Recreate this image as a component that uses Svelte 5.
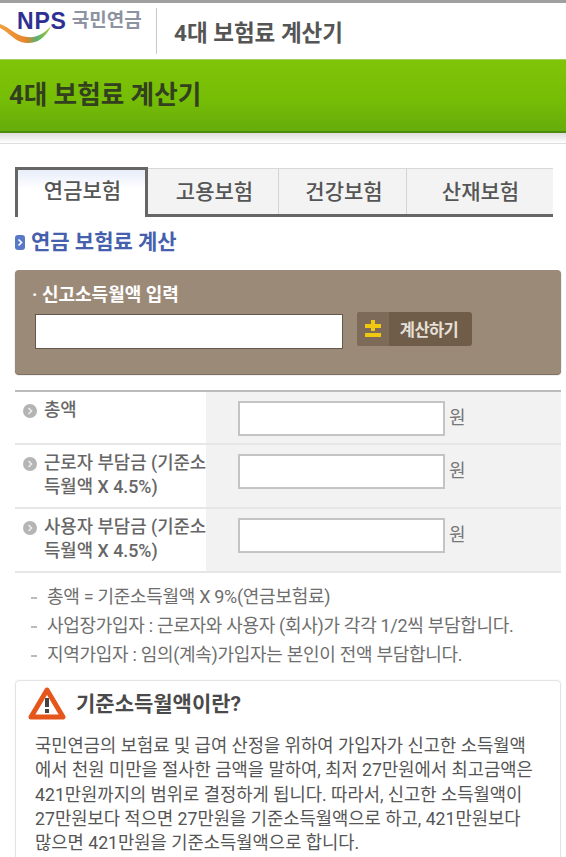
<script>
	const tabs = ['연금보험', '고용보험', '건강보험', '산재보험'];
	const rows = [
		{ label: '총액', tall: false },
		{ label: '근로자 부담금 (기준소득월액 X 4.5%)', tall: true },
		{ label: '사용자 부담금 (기준소득월액 X 4.5%)', tall: true }
	];
	const notes = [
		'총액 = 기준소득월액 X 9%(연금보험료)',
		'사업장가입자 : 근로자와 사용자 (회사)가 각각 1/2씩 부담합니다.',
		'지역가입자 : 임의(계속)가입자는 본인이 전액 부담합니다.'
	];
</script>

<div class="page">
	<header class="top">
		<div class="logo">
			<svg class="swoosh" viewBox="0 0 52 32" width="52" height="32" aria-hidden="true">
				<defs>
					<linearGradient id="sw" x1="0" x2="1" y1="0" y2="0">
						<stop offset="0" stop-color="#f0a040" />
						<stop offset="0.5" stop-color="#e8852a" />
						<stop offset="0.72" stop-color="#58b070" />
						<stop offset="1" stop-color="#a8cc30" />
					</linearGradient>
				</defs>
				<path d="M0 11 C10 14 15 23 27 24 C36 25 44 21 51 13 C46 25 36 31 26 30 C15 29 10 20 0 15 Z" fill="url(#sw)" />
			</svg>
			<span class="nps">NPS</span>
			<span class="kor">국민연금</span>
		</div>
		<span class="top-title">4대 보험료 계산기</span>
	</header>

	<div class="banner"><h1>4대 보험료 계산기</h1></div>
	<div class="rule"></div>

	<nav class="tabs">
		{#each tabs as tab, i}
			<div class="tab tab-{i}" class:active={i === 0}>{tab}</div>
		{/each}
	</nav>

	<h2 class="section">
		<svg viewBox="0 0 10 15" width="10" height="15" aria-hidden="true">
			<rect width="10" height="15" rx="3" fill="#5a78c8" />
			<path d="M3.5 4.5 L6.5 7.5 L3.5 10.5" fill="none" stroke="#fff" stroke-width="1.6" />
		</svg>
		연금 보험료 계산
	</h2>

	<section class="income">
		<label for="income-input">· 신고소득월액 입력</label>
		<div class="income-row">
			<input id="income-input" type="text" />
			<button type="button">
				<span class="btn-icon">
					<svg viewBox="0 0 16 18" width="16" height="18" aria-hidden="true">
						<path d="M6 0h4v4h6v4h-6v3H6V8H0V4h6z M0 13h16v4H0z" fill="#f0c810" />
					</svg>
				</span>
				<span class="btn-text">계산하기</span>
			</button>
		</div>
	</section>

	<div class="table">
		{#each rows as row}
			<div class="row" class:tall={row.tall}>
				<div class="row-label">
					<svg viewBox="0 0 14 14" width="14" height="14" aria-hidden="true">
						<circle cx="7" cy="7" r="7" fill="#b4b4b4" />
						<path d="M5.5 4 L8.5 7 L5.5 10" fill="none" stroke="#eee" stroke-width="1.5" />
					</svg>
					<span>{row.label}</span>
				</div>
				<div class="row-field">
					<input type="text" />
					<span class="won">원</span>
				</div>
			</div>
		{/each}
	</div>

	<ul class="notes">
		{#each notes as note}
			<li>{note}</li>
		{/each}
	</ul>

	<section class="card">
		<div class="card-head">
			<svg viewBox="0 0 38 34" width="38" height="34" aria-hidden="true">
				<path d="M19 3 L35 30 H3 Z" fill="#fff" stroke="#e4561c" stroke-width="5" stroke-linejoin="round" />
				<rect x="17" y="11" width="4" height="9" fill="#444" />
				<rect x="17" y="22" width="4" height="4" fill="#444" />
			</svg>
			<h3>기준소득월액이란?</h3>
		</div>
		<p>
			국민연금의 보험료 및 급여 산정을 위하여 가입자가 신고한 소득월액<br />
			에서 천원 미만을 절사한 금액을 말하여, 최저 27만원에서 최고금액은<br />
			421만원까지의 범위로 결정하게 됩니다. 따라서, 신고한 소득월액이<br />
			27만원보다 적으면 27만원을 기준소득월액으로 하고, 421만원보다<br />
			많으면 421만원을 기준소득월액으로 합니다.
		</p>
	</section>
</div>

<style>
	:global(body) {
		margin: 0;
		background: #fff;
	}

	.page {
		width: 566px;
		height: 857px;
		overflow: hidden;
		position: relative;
		font-family: Roboto, "Noto Sans CJK KR", sans-serif;
		color: #555;
	}

	.top {
		height: 56px;
		border-top: 3px solid #a0a0a0;
		display: flex;
		align-items: center;
		background: #fff;
	}

	.logo {
		width: 157px;
		height: 46px;
		display: flex;
		align-items: flex-start;
		border-right: 1px solid #c8c8c8;
		position: relative;
		box-sizing: border-box;
		padding: 0 0 0 17px;
		flex-shrink: 0;
	}

	.swoosh {
		position: absolute;
		left: 0;
		top: 5px;
	}

	.nps {
		font-family: "Liberation Sans", sans-serif;
		font-size: 23px;
		font-weight: 700;
		line-height: 27px;
		color: #2e3192;
		letter-spacing: 0.8px;
		position: relative;
	}

	.kor {
		font-size: 19px;
		font-weight: 700;
		line-height: 26px;
		color: #8d93a0;
		margin-left: 5px;
	}

	.top-title {
		margin-left: 17px;
		font-size: 22.5px;
		font-weight: 700;
		color: #555;
	}

	.banner {
		height: 74px;
		box-sizing: border-box;
		display: flex;
		align-items: center;
		padding-left: 9px;
		background: linear-gradient(#80c408, #76bd06 55%, #66ac0c);
		border-top: 1px solid #a4d060;
		border-bottom: 2px solid #4e8c10;
	}

	.banner h1 {
		margin: 0 0 6px;
		font-size: 25.6px;
		font-weight: 700;
		color: #33401f;
	}

	.rule {
		height: 10px;
		background: linear-gradient(#ddd, #fff);
		border-bottom: 1px solid #ddd;
	}

	.tabs {
		margin: 23px 13px 0 15px;
		height: 50px;
		display: flex;
		box-sizing: border-box;
		border-bottom: 3px solid #666;
	}

	.tab {
		background: #f3f3f3;
		border-top: 1px solid #d8d8d8;
		border-right: 1px solid #d4d4d4;
		margin-top: 1px;
		display: flex;
		align-items: center;
		justify-content: center;
		font-size: 21px;
		font-weight: 500;
		color: #555;
		box-sizing: border-box;
		height: 46px;
		padding: 0 0 3px 3px;
	}

	.tab-0 { width: 133px; }
	.tab-1 { width: 131px; }
	.tab-2 { width: 128px; }
	.tab-3 { width: 146px; border-right: 0; padding-left: 1px; }

	.tab.active {
		margin-top: 0;
		height: 50px;
		background: linear-gradient(#e8edfa, #fff 40%);
		border: 3px solid #666;
		border-bottom: 0;
		padding: 0 0 10px 2px;
		color: #555;
	}

	.section {
		margin: 12px 0 0 15px;
		display: flex;
		align-items: center;
		gap: 6px;
		font-size: 21px;
		font-weight: 700;
		line-height: 26px;
		color: #4560ac;
	}

	.income {
		margin: 15px 5px 0 15px;
		height: 104px;
		box-sizing: border-box;
		padding: 13px 18px 0 20px;
		background: #9c8a78;
		border-radius: 4px;
		box-shadow: 0 1px 1px #6f6252;
	}

	.income label {
		display: block;
		font-size: 18px;
		font-weight: 700;
		line-height: 24px;
		color: #fff;
		margin-left: -3px;
	}

	.income-row {
		margin-top: 7px;
		display: flex;
		align-items: flex-start;
		gap: 14px;
	}

	.income input {
		width: 308px;
		height: 35px;
		box-sizing: border-box;
		background: #fff;
		border: 1px solid #64584c;
		border-radius: 0;
		padding: 0;
	}

	.income button {
		margin-top: -2px;
		width: 115px;
		height: 34px;
		display: flex;
		padding: 0;
		border: 0;
		border-radius: 3px;
		background: #6f5c49;
		overflow: hidden;
		font: inherit;
	}

	.btn-icon {
		width: 32px;
		height: 100%;
		background: #7d6a58;
		display: flex;
		align-items: center;
		justify-content: center;
	}

	.btn-text {
		flex: 1;
		height: 100%;
		display: flex;
		align-items: center;
		justify-content: center;
		font-size: 16.5px;
		font-weight: 700;
		letter-spacing: -0.6px;
		color: #e6e0d8;
		padding-right: 3px;
	}

	.table {
		margin: 16px 5px 0 15px;
		border-top: 2px solid #bbb;
	}

	.row {
		height: 53px;
		display: flex;
		border-bottom: 2px solid #e6e6e6;
		box-sizing: border-box;
	}

	.row.tall {
		height: 64px;
	}

	.row-label {
		width: 191px;
		flex-shrink: 0;
		box-sizing: border-box;
		padding: 6px 0 0 8px;
		display: flex;
		gap: 7px;
		font-size: 17.8px;
		font-weight: 500;
		line-height: 24px;
		color: #666;
		word-break: break-all;
	}

	.row-label span {
		margin-right: -4px;
	}

	.row-label svg {
		flex-shrink: 0;
		margin-top: 6px;
	}

	.row-field {
		flex: 1;
		background: #f2f2f2;
		display: flex;
		align-items: flex-start;
		padding: 9px 0 0 32px;
	}

	.row-field input {
		width: 207px;
		height: 35px;
		box-sizing: border-box;
		background: #fff;
		border: 2px solid #c4c4c4;
		border-radius: 0;
		padding: 0;
	}

	.won {
		margin-left: 4px;
		font-size: 18px;
		line-height: 33px;
		color: #777;
	}

	.notes {
		list-style: none;
		margin: 9px 0 0;
		padding: 0 0 0 31px;
		font-size: 18px;
		line-height: 29px;
		color: #6e6e6e;
	}

	.notes li {
		position: relative;
		padding-left: 16px;
		letter-spacing: -0.3px;
	}

	.notes li::before {
		content: '';
		position: absolute;
		left: 0;
		top: 15px;
		width: 6px;
		height: 2px;
		background: #bbb;
	}

	.card {
		margin: 11px 5px 0 15px;
		height: 200px;
		box-sizing: border-box;
		padding: 6px 0 0 12px;
		border: 1px solid #e4e4e4;
		border-radius: 4px;
		box-shadow: 0 0 2px #eee;
	}

	.card-head {
		display: flex;
		align-items: center;
		gap: 10px;
		height: 34px;
	}

	.card h3 {
		margin: 0 0 4px;
		font-size: 21px;
		font-weight: 700;
		color: #4a4a4a;
	}

	.card p {
		margin: 13px 0 0 7px;
		font-size: 17.7px;
		line-height: 24.3px;
		color: #555;
		white-space: nowrap;
	}
</style>
